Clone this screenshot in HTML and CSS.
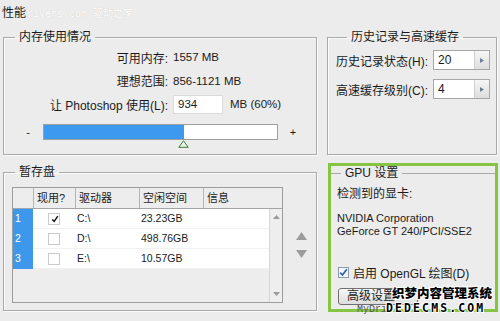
FILE: index.html
```html
<!DOCTYPE html>
<html lang="zh-CN">
<head>
  <meta charset="UTF-8">
  <title>性能</title>
  <link rel="stylesheet" href="styles.css">
</head>
<body>

  <div class="title">性能<span class="wm-top">rivers.com 驱动之家</span></div>

  <div class="panes">
    <fieldset class="group mem">
      <legend>内存使用情况</legend>
      <div class="mem-grid">
        <span class="lbl">可用内存:</span><span class="val">1557 MB</span>
        <span class="lbl">理想范围:</span><span class="val">856-1121 MB</span>
        <span class="lbl">让 Photoshop 使用(L):</span>
        <span class="val"><span class="field">934</span>MB (60%)</span>
      </div>
      <div class="slider">
        <span class="sign">-</span>
        <div class="track">
          <div class="fill" style="width:140px"></div>
          <svg class="thumb" width="11" height="8" viewBox="0 0 11 8"><path d="M5.5 0.8 L10.2 7.3 L0.8 7.3 Z" fill="#e9f3e6" stroke="#3d7a3f" stroke-width="1"/></svg>
        </div>
        <span class="sign">+</span>
      </div>
    </fieldset>

    <fieldset class="group hist">
      <legend>历史记录与高速缓存</legend>
      <div class="hist-row">
        <span class="hist-lbl">历史记录状态(H):</span>
        <div class="spin"><span class="spin-val">20</span><span class="spin-btn"><svg width="4" height="5" viewBox="0 0 4 5"><path d="M0 0 L4 2.5 L0 5 Z" fill="#6c7f99"/></svg></span></div>
      </div>
      <div class="hist-row">
        <span class="hist-lbl">高速缓存级别(C):</span>
        <div class="spin"><span class="spin-val">4</span><span class="spin-btn"><svg width="4" height="5" viewBox="0 0 4 5"><path d="M0 0 L4 2.5 L0 5 Z" fill="#6c7f99"/></svg></span></div>
      </div>
    </fieldset>

    <fieldset class="group scratch">
      <legend>暂存盘</legend>
      <div class="scratch-body">
        <div class="disk-table">
          <div class="thead">
            <span></span><span>现用?</span><span>驱动器</span><span>空闲空间</span><span>信息</span>
          </div>
          <div class="tbody">
            <div class="rows">
              <div class="row">
                <span class="num">1</span>
                <span class="use"><span class="box"><svg width="10" height="10" viewBox="0 0 10 10"><path d="M1.5 5.5 L4 8 L8.5 1.5" fill="none" stroke="#111" stroke-width="1.8"/></svg></span></span>
                <span>C:\</span><span>23.23GB</span><span></span>
              </div>
              <div class="row">
                <span class="num">2</span>
                <span class="use"><span class="box"></span></span>
                <span>D:\</span><span>498.76GB</span><span></span>
              </div>
              <div class="row">
                <span class="num">3</span>
                <span class="use"><span class="box"></span></span>
                <span>E:\</span><span>10.57GB</span><span></span>
              </div>
            </div>
            <div class="vscroll">
              <svg width="7" height="4" viewBox="0 0 7 4"><path d="M3.5 0 L7 4 L0 4 Z" fill="#9a9a9a"/></svg>
              <svg width="7" height="4" viewBox="0 0 7 4"><path d="M0 0 L7 0 L3.5 4 Z" fill="#9a9a9a"/></svg>
            </div>
          </div>
        </div>
        <div class="order">
          <svg width="11" height="8" viewBox="0 0 11 8"><path d="M5.5 0 L11 8 L0 8 Z" fill="#9c9c9c"/></svg>
          <svg width="11" height="8" viewBox="0 0 11 8"><path d="M0 0 L11 0 L5.5 8 Z" fill="#9c9c9c"/></svg>
        </div>
      </div>
    </fieldset>

    <div class="gpu-box">
      <fieldset class="group gpu">
        <legend>GPU 设置</legend>
        <div class="gpu-head">检测到的显卡:</div>
        <div class="gpu-card">NVIDIA Corporation<br>GeForce GT 240/PCI/SSE2</div>
        <label class="gl">
          <span class="gl-box"><svg width="9" height="9" viewBox="0 0 9 9"><path d="M1.2 4.6 L3.5 7 L7.8 1.2" fill="none" stroke="#2f5fb0" stroke-width="1.7"/></svg></span>
          启用 OpenGL 绘图(D)
        </label>
        <button class="adv">高级设置</button>
      </fieldset>
    </div>
  </div>

  <div class="wm-cn">织梦内容管理系统</div>
  <div class="wm-en"><span class="wm-my">MyDri</span><span class="wm-dede">DEDECMS.COM</span></div>

</body>
</html>
```

FILE: styles.css
```css
body {
  margin: 0;
  width: 500px;
  height: 321px;
  overflow: hidden;
  position: relative;
  background: #ececec;
  color: #1b1b1b;
  font-family: "Liberation Sans", "Noto Sans CJK SC", sans-serif;
  font-size: 12px;
}
.title {
  position: relative;
  height: 30px;
  padding-left: 2px;
  line-height: 26px;
}
.wm-top {
  position: absolute;
  left: 27px;
  top: 8px;
  line-height: 14px;
  color: #fff;
  font-family: "Liberation Mono", "Noto Sans CJK SC", monospace;
  font-size: 10px;
  text-shadow: 0 0 1px #c4c4c4;
}
.panes {
  display: grid;
  grid-template-columns: 314px 170px;
  grid-template-rows: 125px 149px;
  column-gap: 10px;
  row-gap: 8px;
  padding-left: 3px;
}
.group {
  margin: 0;
  padding: 0;
  min-width: 0;
  border: 1px solid #a9a9a9;
  box-shadow: inset 1px 1px 0 #fbfbfb, 1px 1px 0 #fbfbfb;
}
.group legend {
  margin-left: 11px;
  padding: 0 4px;
  line-height: 15px;
}

/* memory */
.mem-grid {
  display: grid;
  grid-template-columns: 164px auto;
  grid-template-rows: 24px 23px 25px;
  column-gap: 5px;
  align-items: center;
}
.lbl {
  text-align: right;
}
.val {
  font-size: 11.5px;
}
.field {
  display: inline-block;
  box-sizing: border-box;
  width: 50px;
  height: 19px;
  margin-right: 7px;
  padding-left: 4px;
  background: #fff;
  border: 1px solid #dadada;
  line-height: 17px;
  vertical-align: middle;
}
.slider {
  display: flex;
  align-items: center;
  gap: 10px;
  margin-top: 7px;
  padding: 0 0 14px 19px;
}
.sign {
  width: 10px;
  text-align: center;
  font-size: 11px;
}
.track {
  position: relative;
  box-sizing: border-box;
  width: 235px;
  height: 16px;
  background: #fff;
  border: 1px solid #9f9f9f;
}
.fill {
  height: 100%;
  background: #3d99ee;
}
.thumb {
  position: absolute;
  left: 134px;
  top: 15px;
}

/* history */
.hist {
  display: flex;
  flex-direction: column;
  gap: 9px;
  padding: 5px 0 0 8px;
}
.hist-row {
  display: flex;
  align-items: center;
}
.hist-lbl {
  width: 97px;
}
.spin {
  display: flex;
  box-sizing: border-box;
  width: 57px;
  height: 20px;
  border: 1px solid #a7a7a7;
}
.spin-val {
  flex: 1;
  padding-left: 4px;
  background: #fff;
  line-height: 18px;
}
.spin-btn {
  display: flex;
  align-items: center;
  justify-content: center;
  width: 14px;
  border-left: 1px solid #cfcfcf;
  background: linear-gradient(#f6f6f6, #dedede);
}

/* scratch disks */
.scratch {
  margin: 2px 0 1px;
}
.scratch-body {
  display: flex;
  align-items: center;
  gap: 13px;
  margin: 7px 0 0 8px;
}
.disk-table {
  box-sizing: border-box;
  width: 271px;
  height: 116px;
  border: 1px solid #9c9c9c;
  background: #ededed;
  font-size: 11px;
}
.thead, .row {
  display: grid;
  grid-template-columns: 20px 42px 64px 64px 1fr;
}
.thead {
  height: 20px;
  border-bottom: 1px solid #a5a5a5;
  line-height: 20px;
}
.thead span {
  padding-left: 3px;
  border-left: 1px solid #b4b4b4;
}
.thead span:first-child {
  border-left: none;
}
.tbody {
  display: flex;
  height: 93px;
}
.rows {
  flex: 1;
}
.row {
  height: 19px;
  border-bottom: 1px solid #f1f1f1;
  background: #fff;
  line-height: 19px;
  font-size: 10.5px;
}
.row span {
  padding-left: 2px;
}
.row .num {
  padding-left: 2px;
  background: #3d98ec;
  color: #fff;
  box-shadow: 0 1px 0 #3d98ec;
}
.row .use {
  display: flex;
  align-items: center;
  padding-left: 15px;
}
.box {
  display: flex;
  align-items: center;
  justify-content: center;
  box-sizing: border-box;
  width: 12px;
  height: 12px;
  background: #fff;
  border: 1px solid #cacaca;
}
.vscroll {
  display: flex;
  flex-direction: column;
  justify-content: space-between;
  align-items: center;
  width: 12px;
  padding: 6px 0 6px;
  border-left: 1px solid #d6d6d6;
  background: #eeeeee;
}
.order {
  display: flex;
  flex-direction: column;
  gap: 10px;
}

/* gpu */
.gpu-box {
  box-sizing: border-box;
  margin: 0 -1px 0 1px;
  border: 3px solid #86c443;
}
.gpu {
  height: 100%;
  box-sizing: border-box;
  border: none;
  border-top: 1px solid #a9a9a9;
  box-shadow: none;
  padding-left: 6px;
}
.gpu legend {
  margin-left: 4px;
}
.gpu-head {
  margin-top: 5px;
  line-height: 16px;
}
.gpu-card {
  margin-top: 10px;
  font-size: 11px;
  line-height: 13px;
}
.gl {
  display: flex;
  align-items: center;
  gap: 4px;
  height: 14px;
  margin-top: 27px;
  padding-left: 1px;
}
.gl-box {
  display: flex;
  align-items: center;
  justify-content: center;
  box-sizing: border-box;
  width: 11px;
  height: 11px;
  background: #f4f7fb;
  border: 1px solid #8b9bb0;
}
.adv {
  display: block;
  width: 80px;
  height: 17px;
  margin: 9px 0 0 1px;
  padding: 0 0 0 8px;
  text-align: left;
  font: inherit;
  line-height: 15px;
  color: #1b1b1b;
  background: linear-gradient(#f7f7f7, #dddddd);
  border: 1px solid #707070;
  border-radius: 3px;
}

/* watermarks */
.wm-cn {
  position: absolute;
  left: 392px;
  top: 285px;
  font-family: "Noto Sans CJK SC", sans-serif;
  font-size: 12.5px;
  font-weight: 900;
  line-height: 16px;
  color: #000;
  text-shadow: 1px 0 0 #fff, -1px 0 0 #fff, 0 1px 0 #fff, 0 -1px 0 #fff, 1px 1px 0 #fff, -1px -1px 0 #fff, 1px -1px 0 #fff, -1px 1px 0 #fff;
}
.wm-en {
  position: absolute;
  left: 357px;
  top: 302px;
  line-height: 12px;
  white-space: nowrap;
}
.wm-my {
  font-family: "Liberation Mono", monospace;
  font-size: 10px;
  color: #5a5a5a;
}
.wm-dede {
  margin-left: -1px;
  font-family: "DejaVu Sans Mono", monospace;
  font-size: 11.5px;
  font-weight: bold;
  letter-spacing: 2.1px;
  color: #000;
  text-shadow: 1px 0 0 #fff, -1px 0 0 #fff, 0 1px 0 #fff, 0 -1px 0 #fff, 1px 1px 0 #fff, -1px -1px 0 #fff;
}
```
